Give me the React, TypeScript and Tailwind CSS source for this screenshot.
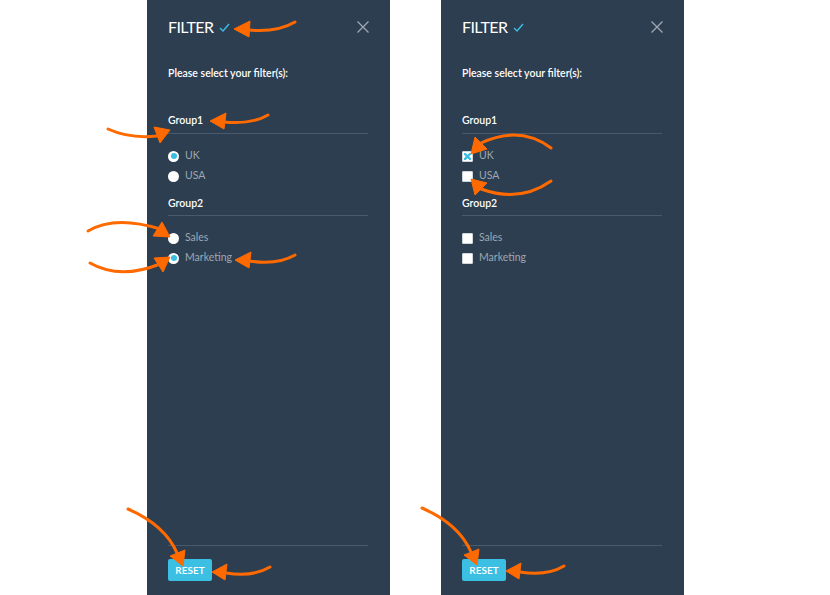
import React from "react";

const font = { fontFamily: "Lato, 'Open Sans', sans-serif" };

function Radio({ checked }: { checked?: boolean }) {
  return (
    <span className="flex h-[11px] w-[11px] items-center justify-center rounded-full bg-white">
      {checked && <span className="h-[6px] w-[6px] rounded-full bg-[#3bbde3]" />}
    </span>
  );
}

function Check({ checked }: { checked?: boolean }) {
  return (
    <span className="flex h-[11px] w-[11px] items-center justify-center rounded-[1px] border border-[#cfd6dc] bg-white">
      {checked && (
        <svg width="7" height="7" viewBox="0 0 7 7">
          <path d="M1 1 L6 6 M6 1 L1 6" stroke="#3bbde3" strokeWidth="2.4" strokeLinecap="square" />
        </svg>
      )}
    </span>
  );
}

function Option({ label, kind, checked }: { label: string; kind: "radio" | "check"; checked?: boolean }) {
  return (
    <div className="flex h-[20px] items-center gap-[6px]">
      {kind === "radio" ? <Radio checked={checked} /> : <Check checked={checked} />}
      <span className="text-[10.5px] text-[#9ea8b3]">{label}</span>
    </div>
  );
}

function Panel({ kind }: { kind: "radio" | "check" }) {
  return (
    <div className="flex h-[595px] w-[243px] flex-col bg-[#2c3e50] pl-[21px] pr-[22px]" style={font}>
      <div className="flex h-[54px] items-center justify-between">
        <div className="flex items-center gap-[6px]">
          <span className="text-[16px] leading-none tracking-[-0.6px] text-white">FILTER</span>
          <svg width="11" height="9" viewBox="0 0 11 9">
            <path d="M1 5 L4 8 L10 1" fill="none" stroke="#3bbde3" strokeWidth="1.4" />
          </svg>
        </div>
        <svg width="12" height="12" viewBox="0 0 12 12" className="mr-[-1px]">
          <path d="M0.5 0.5 L11.5 11.5 M11.5 0.5 L0.5 11.5" stroke="#a0a9b3" strokeWidth="1.3" />
        </svg>
      </div>
      <div className="mt-[9px] text-[10.5px] font-semibold leading-[20px] text-white">Please select your filter(s):</div>
      <div className="mt-[27px] text-[10.5px] font-semibold leading-[20px] text-white">Group1</div>
      <div className="mt-[3px] h-px bg-[#485a6b]" />
      <div className="mt-[12px]">
        <Option label="UK" kind={kind} checked />
        <Option label="USA" kind={kind} />
      </div>
      <div className="mt-[7px] text-[10.5px] font-semibold leading-[20px] text-white">Group2</div>
      <div className="mt-[2px] h-px bg-[#485a6b]" />
      <div className="mt-[12px]">
        <Option label="Sales" kind={kind} />
        <Option label="Marketing" kind={kind} checked={kind === "radio"} />
      </div>
      <div className="flex-1" />
      <div className="h-px bg-[#485a6b]" />
      <div className="mt-[13px] mb-[14px]">
        <button className="flex h-[22px] w-[44px] items-center justify-center rounded-[2px] bg-[#3bbfe3] text-[10px] font-semibold text-white">
          RESET
        </button>
      </div>
    </div>
  );
}

function Arrow({ d, head }: { d: string; head: string }) {
  return (
    <g>
      <path d={d} fill="none" stroke="#ff6a00" strokeWidth="3" strokeLinecap="round" />
      <polygon points={head} fill="#ff6a00" stroke="#ff6a00" strokeWidth="1" strokeLinejoin="round" />
    </g>
  );
}

export default function App() {
  return (
    <div className="relative h-[595px] w-[830px] overflow-hidden bg-white">
      <div className="flex gap-[51px] pl-[147px]">
        <Panel kind="radio" />
        <Panel kind="check" />
      </div>
      <svg className="pointer-events-none absolute left-0 top-0" width="830" height="595" viewBox="0 0 830 595">
        <Arrow d="M295 22 C285 28 270 32 248 30" head="234,29 250,21 249,37" />
        <Arrow d="M268 115 C258 121 245 124 224 122" head="210,121 226,113 224,129" />
        <Arrow d="M108 129 Q130 139 157 136" head="170,130 154,127 160,143" />
        <Arrow d="M88 231 Q115 215 160 229" head="170,237 162,222 153,236" />
        <Arrow d="M90 263 Q120 280 160 264" head="170,257 163,272 154,258" />
        <Arrow d="M295 255 C285 261 270 264 249 261" head="235,260 251,252 249,268" />
        <Arrow d="M128 509 Q165 525 177 553" head="183,566 185,550 170,556" />
        <Arrow d="M270 567 C260 573 245 576 226 573" head="212,572 227,564 225,580" />
        <Arrow d="M551 148 Q520 125 481 143" head="471,154 487,149 475,137" />
        <Arrow d="M551 181 Q520 203 481 189" head="471,179 487,183 475,195" />
        <Arrow d="M422 508 Q459 524 471 552" head="477,565 479,549 464,555" />
        <Arrow d="M564 566 C554 572 539 575 520 572" head="506,571 521,563 519,579" />
      </svg>
    </div>
  );
}
